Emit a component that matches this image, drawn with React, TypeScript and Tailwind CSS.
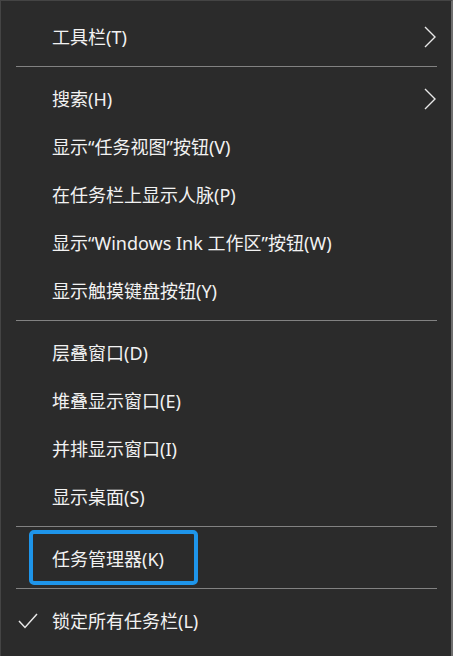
import type { ReactNode } from "react"

const Chevron = () => (
  <svg width="12" height="22" viewBox="0 0 12 22" className="absolute right-[15px] top-1/2 -translate-y-1/2">
    <polyline points="1,1 11,11 1,21" fill="none" stroke="#e8e8e8" strokeWidth="1.4" />
  </svg>
)

const Check = () => (
  <svg width="22" height="18" viewBox="0 0 22 18" className="absolute left-[16px] top-1/2 -translate-y-1/2">
    <polyline points="2,9 8,15.5 20,2" fill="none" stroke="#e8e8e8" strokeWidth="1.5" />
  </svg>
)

const Item = ({
  children = null as ReactNode,
  sub = false,
  checked = false,
  focus = false
}) => (
  <div className="relative flex h-12 items-center pl-[51px] text-[18px] leading-none text-[#f2f2f2]">
    {checked && <Check />}
    <span>{children}</span>
    {sub && <Chevron />}
    {focus && (
      <div className="absolute left-[28px] top-[-5px] h-[55px] w-[169px] rounded-[5px] border-[4px] border-[#1e95ea]" />
    )}
  </div>
)

const Sep = () => (
  <div className="pt-[5px] pb-[8px] pl-[15px] pr-[14px]">
    <div className="h-px bg-[#828282]" />
  </div>
)

export default function App() {
  return (
    <div
      className="h-[656px] w-[453px] overflow-hidden border-l border-t border-[#444] border-r-2 border-r-[#6e6e6e] bg-[#2b2b2b] pt-[12px]"
      style={{ fontFamily: '"Noto Sans", "Noto Sans CJK SC", sans-serif' }}
    >
      <Item sub>工具栏(T)</Item>
      <Sep />
      <Item sub>搜索(H)</Item>
      <Item>显示“任务视图”按钮(V)</Item>
      <Item>在任务栏上显示人脉(P)</Item>
      <Item>显示“Windows Ink 工作区”按钮(W)</Item>
      <Item>显示触摸键盘按钮(Y)</Item>
      <Sep />
      <Item>层叠窗口(D)</Item>
      <Item>堆叠显示窗口(E)</Item>
      <Item>并排显示窗口(I)</Item>
      <Item>显示桌面(S)</Item>
      <Sep />
      <Item focus>任务管理器(K)</Item>
      <Sep />
      <Item checked>锁定所有任务栏(L)</Item>
    </div>
  )
}
